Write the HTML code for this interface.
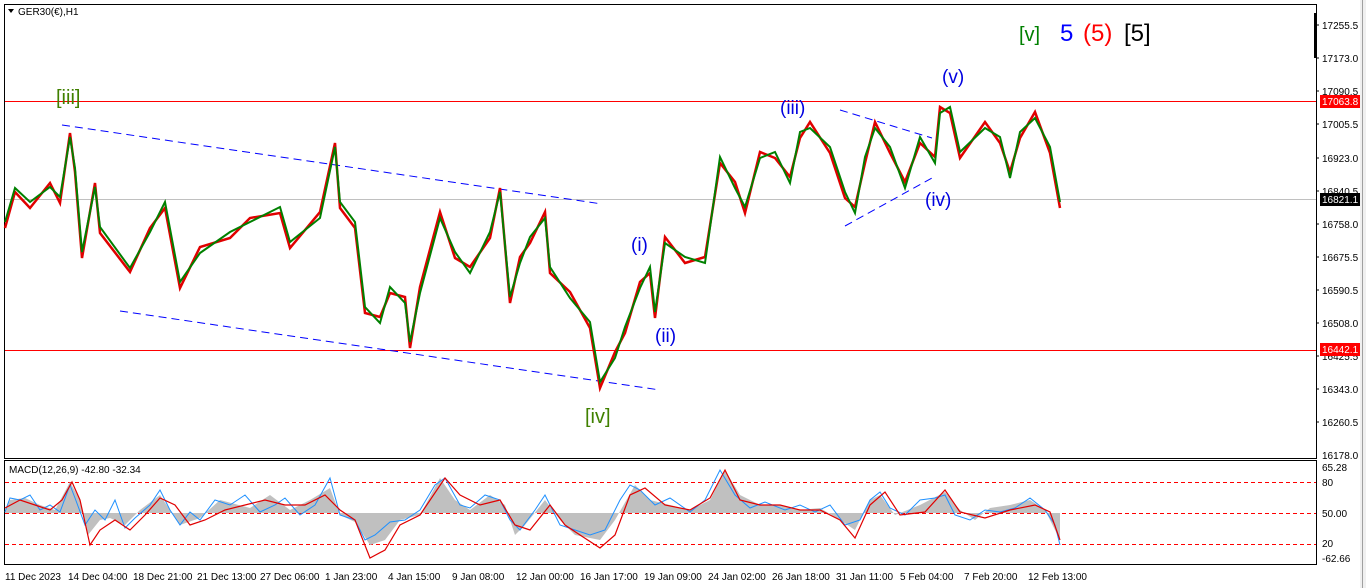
<!DOCTYPE html>
<html><head><meta charset="utf-8"><style>
html,body{margin:0;padding:0;background:#fff;width:1366px;height:588px;overflow:hidden}
svg{display:block;font-family:"Liberation Sans",sans-serif}
</style></head><body>
<svg width="1366" height="588" viewBox="0 0 1366 588" xmlns="http://www.w3.org/2000/svg">
<rect x="0" y="0" width="1366" height="588" fill="#fff"/>
<rect x="1360" y="0" width="6" height="588" fill="#f0f0f0"/>
<line x1="1362.5" y1="0" x2="1362.5" y2="588" stroke="#a0a0a0"/>
<rect x="4.5" y="4.5" width="1312" height="454" fill="none" stroke="#000"/>
<rect x="4.5" y="460.5" width="1312" height="104" fill="none" stroke="#000"/>
<rect x="1314" y="13" width="3" height="45" fill="#000"/>
<path d="M8 9 L14 9 L11 13 Z" fill="#000"/>
<text x="18" y="15" font-size="10">GER30(€),H1</text>
<line x1="5" y1="101.5" x2="1316" y2="101.5" stroke="#f00"/>
<line x1="5" y1="350.5" x2="1316" y2="350.5" stroke="#f00"/>
<line x1="5" y1="199.5" x2="1316" y2="199.5" stroke="#c0c0c0"/>
<g stroke="#00f" stroke-dasharray="8,5" fill="none">
<line x1="62" y1="125" x2="602" y2="204"/>
<line x1="120" y1="311" x2="660" y2="390"/>
<line x1="840" y1="110" x2="932" y2="138"/>
<line x1="845" y1="226" x2="932" y2="178"/>
</g>
<polyline fill="none" stroke="#e00000" stroke-width="2.5" points="5,228 15,192 30,208 50,183 60,203 70,133 75,172 82,258 95,183 100,233 130,272 150,228 165,208 180,288 200,247 230,238 250,218 280,213 290,248 320,212 335,143 340,208 355,228 365,313 380,317 390,293 405,297 410,348 420,287 440,212 455,258 470,267 490,238 500,188 510,303 520,257 530,243 545,212 550,273 570,292 590,328 600,388 615,352 625,333 640,282 650,273 655,318 665,237 685,263 705,257 720,163 735,182 745,213 760,152 775,158 790,177 800,138 810,122 830,153 845,198 855,207 865,163 875,122 890,153 905,182 920,143 935,157 940,107 950,113 960,158 985,122 1000,143 1010,172 1020,138 1035,112 1050,153 1060,208"/>
<polyline fill="none" stroke="#008000" stroke-width="2" points="5,222 15,188 30,202 50,187 60,197 70,137 75,168 82,252 95,187 100,227 130,268 150,232 165,202 180,282 200,253 230,232 250,222 280,207 290,242 320,218 335,147 340,202 355,222 365,307 380,323 390,287 405,303 410,342 420,293 440,218 455,252 470,273 490,232 500,192 510,297 520,263 530,237 545,218 550,267 570,298 590,322 600,382 615,358 625,327 640,288 650,267 655,312 665,243 685,257 705,263 720,157 735,188 745,207 760,158 775,152 790,183 800,132 810,128 830,147 845,192 855,213 865,157 875,128 890,147 905,188 920,137 935,163 940,113 950,107 960,152 985,128 1000,137 1010,178 1020,132 1035,118 1050,147 1060,202"/>
<g font-size="20">
<text x="56" y="104" fill="#408000">[iii]</text>
<text x="585" y="423" fill="#408000">[iv]</text>
<text x="1019" y="41" fill="#008000">[v]</text>
<text x="1060" y="41" fill="#00f" font-size="24">5</text>
<text x="1083" y="41" fill="#f00" font-size="24">(5)</text>
<text x="1124" y="41" fill="#000" font-size="24">[5]</text>
</g>
<g font-size="19" fill="#0000e0">
<text x="631" y="251">(i)</text>
<text x="655" y="342">(ii)</text>
<text x="780" y="114">(iii)</text>
<text x="942" y="83">(v)</text>
<text x="925" y="206">(iv)</text>
</g>
<g font-size="10" fill="#000">
<text x="1322" y="29">17255.5</text>
<text x="1322" y="62">17173.0</text>
<text x="1322" y="95">17090.5</text>
<text x="1322" y="128">17005.5</text>
<text x="1322" y="162">16923.0</text>
<text x="1322" y="195">16840.5</text>
<text x="1322" y="228">16758.0</text>
<text x="1322" y="261">16675.5</text>
<text x="1322" y="294">16590.5</text>
<text x="1322" y="327">16508.0</text>
<text x="1322" y="360">16425.5</text>
<text x="1322" y="393">16343.0</text>
<text x="1322" y="426">16260.5</text>
<text x="1322" y="459">16178.0</text>
<text x="1322" y="471">65.28</text>
<text x="1322" y="486">80</text>
<text x="1322" y="517">50.00</text>
<text x="1322" y="547">20</text>
<text x="1322" y="562">-62.66</text>
</g>
<g stroke="#000"><line x1="1316" y1="25" x2="1319" y2="25"/><line x1="1316" y1="58" x2="1319" y2="58"/><line x1="1316" y1="91" x2="1319" y2="91"/><line x1="1316" y1="124" x2="1319" y2="124"/><line x1="1316" y1="158" x2="1319" y2="158"/><line x1="1316" y1="191" x2="1319" y2="191"/><line x1="1316" y1="224" x2="1319" y2="224"/><line x1="1316" y1="257" x2="1319" y2="257"/><line x1="1316" y1="290" x2="1319" y2="290"/><line x1="1316" y1="323" x2="1319" y2="323"/><line x1="1316" y1="356" x2="1319" y2="356"/><line x1="1316" y1="389" x2="1319" y2="389"/><line x1="1316" y1="422" x2="1319" y2="422"/></g>
<rect x="1320" y="95" width="40" height="13" fill="#f00"/>
<text x="1322" y="105" font-size="10" fill="#fff">17063.8</text>
<rect x="1320" y="193" width="40" height="13" fill="#000"/>
<text x="1322" y="203" font-size="10" fill="#fff">16821.1</text>
<rect x="1320" y="343" width="40" height="13" fill="#f00"/>
<text x="1322" y="353" font-size="10" fill="#fff">16442.1</text>
<text x="9" y="473" font-size="10">MACD(12,26,9) -42.80 -32.34</text>
<g stroke="#f00" stroke-dasharray="4,3"><line x1="5" y1="482.5" x2="1316" y2="482.5"/><line x1="5" y1="513.5" x2="1316" y2="513.5"/><line x1="5" y1="544.5" x2="1316" y2="544.5"/></g>
<polygon fill="#c0c0c0" points="5,513 10,500 25,498 40,505 55,510 70,482 80,500 88,535 100,520 110,518 125,525 140,510 160,495 180,525 200,518 220,500 250,508 270,495 290,510 310,500 330,488 340,515 355,522 370,545 385,540 400,520 420,515 440,478 455,500 470,510 490,495 505,505 515,535 525,525 545,500 560,520 575,535 600,540 615,520 635,485 650,500 670,505 690,510 710,500 725,470 740,495 760,505 780,505 800,510 820,508 840,520 855,530 870,500 880,495 895,515 920,505 945,492 960,510 975,520 990,508 1010,505 1030,500 1045,510 1060,540 1060,513"/>
<polyline fill="none" stroke="#1e90ff" stroke-width="1" points="5,512 10,498 20,500 30,495 40,510 50,505 60,512 70,485 75,498 85,525 95,510 105,520 115,500 125,528 135,518 150,505 160,490 170,510 180,525 190,512 200,520 215,500 230,505 245,495 260,512 275,505 285,498 300,515 315,505 330,478 340,515 355,520 365,540 375,535 390,522 405,520 420,510 435,485 445,478 460,505 470,508 485,495 500,500 510,520 520,530 535,510 545,495 560,525 575,530 590,535 605,530 620,500 630,485 640,490 655,505 670,498 690,512 705,500 720,470 735,495 750,508 765,502 785,510 800,505 815,512 830,505 845,525 860,520 870,500 880,492 890,508 905,515 920,500 935,498 945,495 955,515 970,520 985,510 1000,512 1015,508 1030,498 1045,510 1055,525 1060,545"/>
<polyline fill="none" stroke="#e00000" stroke-width="1.2" points="5,508 20,500 35,505 50,510 62,500 72,482 80,500 90,545 100,530 115,520 130,530 145,515 160,498 175,505 190,525 205,520 225,510 245,505 265,500 285,505 305,505 325,495 340,510 355,520 370,558 385,550 400,525 420,515 445,478 460,495 480,505 500,500 515,525 530,530 550,505 565,525 580,535 600,548 615,535 630,495 645,488 665,505 690,510 710,498 725,470 740,500 760,505 780,505 800,510 820,510 840,520 855,538 870,505 885,492 900,515 925,512 945,490 960,512 985,518 1010,510 1035,505 1050,512 1060,540"/>
<g font-size="10" fill="#000">
<text x="5" y="580">11 Dec 2023</text>
<text x="68" y="580">14 Dec 04:00</text>
<text x="133" y="580">18 Dec 21:00</text>
<text x="197" y="580">21 Dec 13:00</text>
<text x="260" y="580">27 Dec 06:00</text>
<text x="325" y="580">1 Jan 23:00</text>
<text x="388" y="580">4 Jan 15:00</text>
<text x="452" y="580">9 Jan 08:00</text>
<text x="516" y="580">12 Jan 00:00</text>
<text x="580" y="580">16 Jan 17:00</text>
<text x="644" y="580">19 Jan 09:00</text>
<text x="708" y="580">24 Jan 02:00</text>
<text x="772" y="580">26 Jan 18:00</text>
<text x="836" y="580">31 Jan 11:00</text>
<text x="900" y="580">5 Feb 04:00</text>
<text x="964" y="580">7 Feb 20:00</text>
<text x="1028" y="580">12 Feb 13:00</text>
</g>
</svg>
</body></html>
